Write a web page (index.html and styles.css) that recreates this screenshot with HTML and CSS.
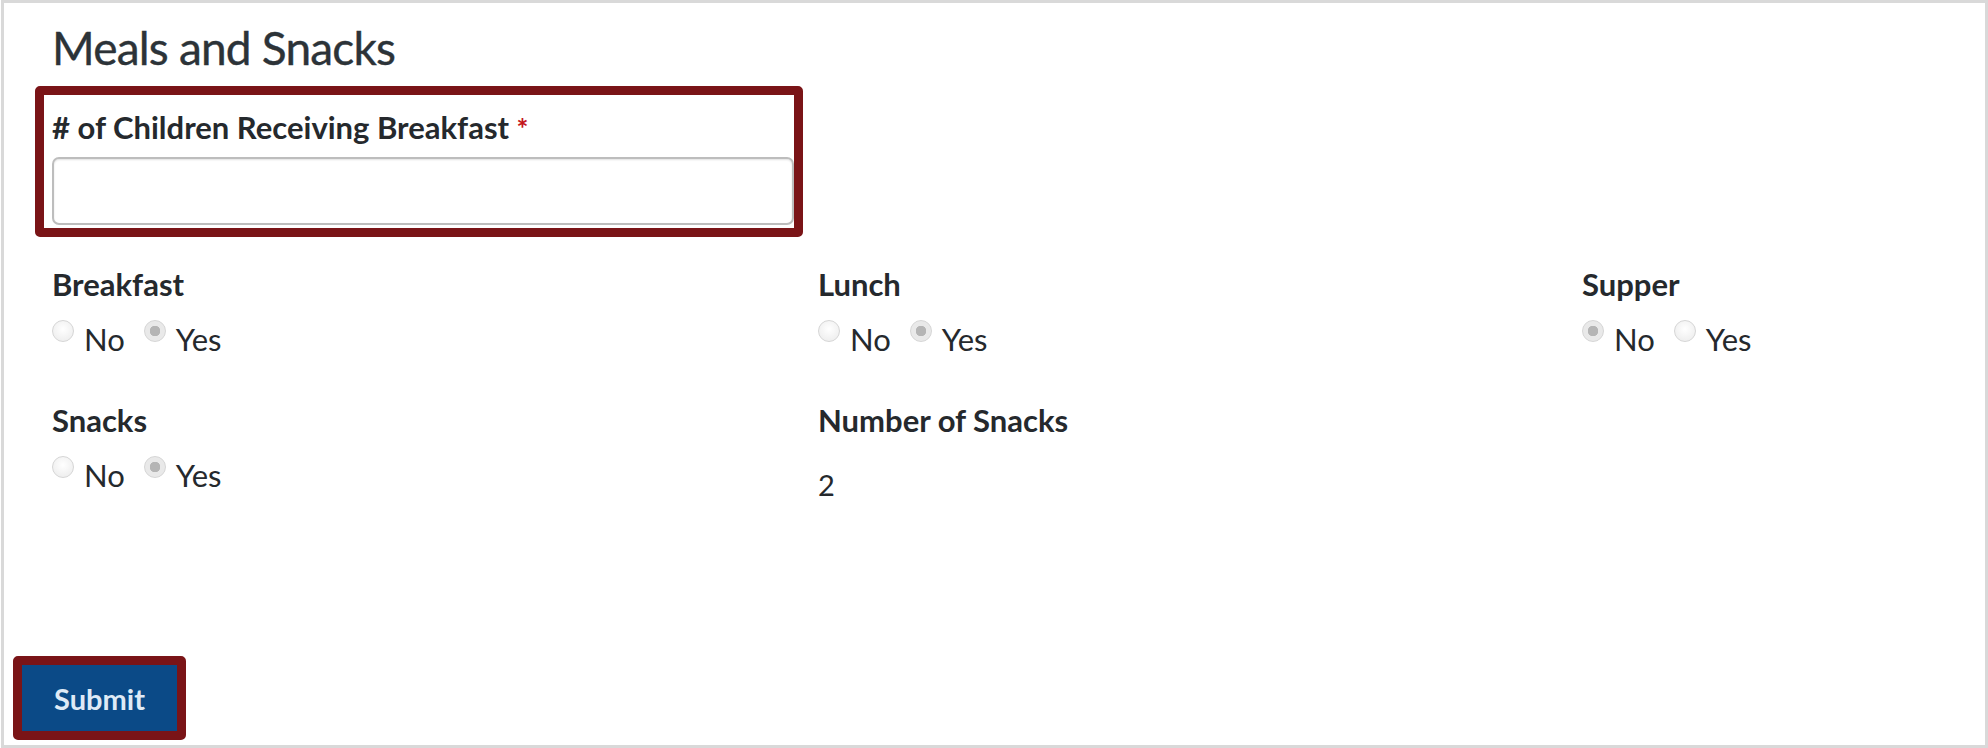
FILE: index.html
```html
<!DOCTYPE html>
<html lang="en">
<head>
<meta charset="utf-8">
<title>Meals and Snacks</title>
<link rel="stylesheet" href="styles.css">
</head>
<body>
<div class="frame">
  <main class="content">
    <h1 class="title">Meals and Snacks</h1>
    <div class="highlight field">
      <label class="label" for="kids"># of Children Receiving Breakfast <span class="req">*</span></label>
      <input id="kids" class="text-input" type="text">
    </div>
    <div class="grid">
      <div class="cell">
        <div class="label">Breakfast</div>
        <div class="radios">
          <input class="radio" type="radio" name="b" disabled><span class="opt">No</span>
          <input class="radio" type="radio" name="b" checked disabled><span class="opt">Yes</span>
        </div>
      </div>
      <div class="cell">
        <div class="label">Lunch</div>
        <div class="radios">
          <input class="radio" type="radio" name="l" disabled><span class="opt">No</span>
          <input class="radio" type="radio" name="l" checked disabled><span class="opt">Yes</span>
        </div>
      </div>
      <div class="cell">
        <div class="label">Supper</div>
        <div class="radios">
          <input class="radio" type="radio" name="s" checked disabled><span class="opt">No</span>
          <input class="radio" type="radio" name="s" disabled><span class="opt">Yes</span>
        </div>
      </div>
      <div class="cell">
        <div class="label">Snacks</div>
        <div class="radios">
          <input class="radio" type="radio" name="n" disabled><span class="opt">No</span>
          <input class="radio" type="radio" name="n" checked disabled><span class="opt">Yes</span>
        </div>
      </div>
      <div class="cell">
        <div class="label">Number of Snacks</div>
        <div class="value">2</div>
      </div>
    </div>
  </main>
  <footer class="footer">
    <div class="highlight btn-wrap">
      <button class="submit" type="button">Submit</button>
    </div>
  </footer>
</div>
</body>
</html>
```
FILE: styles.css
```css
html, body {
  margin: 0;
  padding: 0;
  background: #ffffff;
}
body {
  font-family: "Lato", "Open Sans", sans-serif;
  color: #2d3b45;
}
.frame {
  box-sizing: border-box;
  width: 1987px;
  height: 748px;
  margin-left: 1px;
  border: 3px solid #d9d9d9;
  display: flex;
  flex-direction: column;
  overflow: hidden;
}
.content {
  padding: 17px 0 0 48px;
}
.title {
  margin: 0;
  font-size: 46px;
  line-height: 56px;
  font-weight: 400;
  letter-spacing: -0.8px;
  color: #2c3338;
  -webkit-text-stroke: 0.4px #2c3338;
}
.highlight {
  border: 9px solid #7a1417;
  border-radius: 5px;
}
.field {
  box-sizing: border-box;
  width: 768px;
  margin: 10px 0 0 -17px;
  padding: 14px 0 3px 8px;
}
.label {
  display: block;
  font-size: 31px;
  line-height: 36px;
  font-weight: 700;
  color: #25292d;
}
.req {
  color: #c4161c;
  font-size: 28px;
}
.text-input {
  display: block;
  box-sizing: border-box;
  width: 742px;
  height: 68px;
  margin-top: 11px;
  border: 2px solid #bdbdbd;
  border-radius: 7px;
  box-shadow: inset 0 1px 2px rgba(0, 0, 0, 0.12);
  background: #fff;
  font: inherit;
}
.grid {
  display: grid;
  grid-template-columns: 766px 764px 1fr;
  row-gap: 45px;
  margin-top: 29px;
}
.radios {
  display: flex;
  align-items: flex-start;
  margin-top: 19px;
  font-size: 31px;
  line-height: 36px;
  color: #25292d;
}
.radio {
  -webkit-appearance: none;
  appearance: none;
  box-sizing: border-box;
  width: 22px;
  height: 22px;
  margin: -1px 10px 0 0;
  border: 1px solid #d6d6d6;
  border-radius: 50%;
  background: radial-gradient(circle at 50% 40%, #ffffff 0, #f0f0f0 70%);
}
.radio:checked {
  background: radial-gradient(circle, #b5b5b5 0 5px, #e9e9e9 5.5px);
}
.opt {
  margin-right: 19px;
}
.value {
  margin-top: 29px;
  font-size: 29px;
  line-height: 36px;
  color: #25292d;
}
.footer {
  margin-top: auto;
  padding: 0 0 5px 9px;
}
.btn-wrap {
  display: inline-block;
}
.submit {
  display: block;
  width: 155px;
  height: 66px;
  border: 0;
  margin: 0;
  padding: 0;
  background: #0b4a87;
  color: #dfeaf6;
  font-family: "Lato", "Open Sans", sans-serif;
  font-size: 29px;
  font-weight: 700;
}
```
